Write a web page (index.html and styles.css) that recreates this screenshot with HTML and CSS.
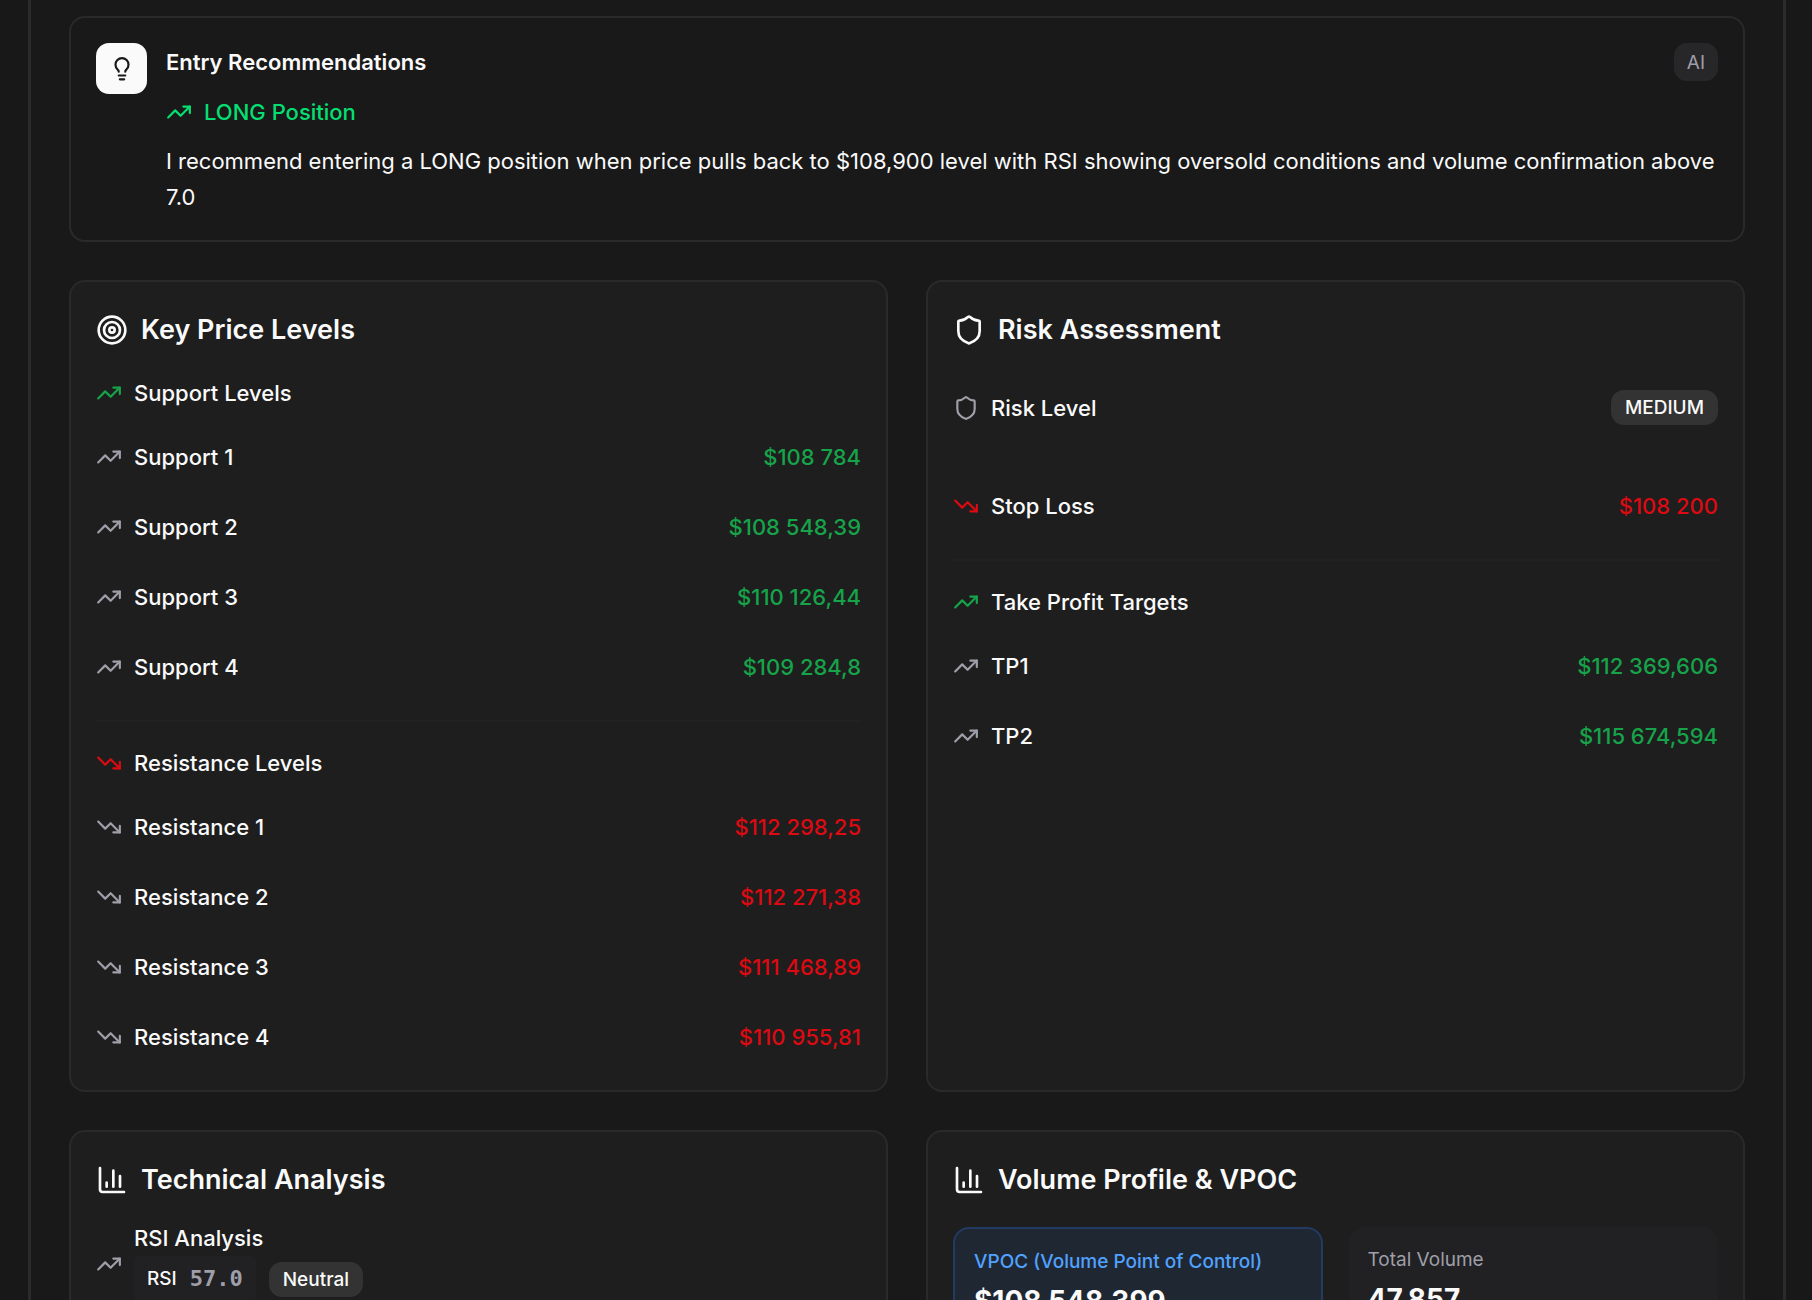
FILE: index.html
```html
<!DOCTYPE html>
<html lang="en">
<head>
    <meta charset="UTF-8">
    <meta name="viewport" content="width=device-width, initial-scale=1.0">
    <title>Market Analysis</title>
    <link rel="stylesheet" href="styles.css">
</head>
<body>
    <!-- Icon sprite -->
    <svg class="sprite" aria-hidden="true">
        <symbol id="up" viewBox="0 0 24 24">
            <path d="M16 7h6v6"/>
            <path d="m22 7-8.5 8.5-5-5L2 17"/>
        </symbol>
        <symbol id="down" viewBox="0 0 24 24">
            <path d="M16 17h6v-6"/>
            <path d="m22 17-8.5-8.5-5 5L2 7"/>
        </symbol>
        <symbol id="shield" viewBox="0 0 24 24">
            <path d="M20 13c0 5-3.5 7.5-7.66 8.95a1 1 0 0 1-.67-.01C7.5 20.5 4 18 4 13V6a1 1 0 0 1 1-1c2 0 4.5-1.2 6.24-2.72a1.17 1.17 0 0 1 1.52 0C14.51 3.81 17 5 19 5a1 1 0 0 1 1 1z"/>
        </symbol>
        <symbol id="target" viewBox="0 0 24 24">
            <circle cx="12" cy="12" r="10"/>
            <circle cx="12" cy="12" r="6"/>
            <circle cx="12" cy="12" r="2"/>
        </symbol>
        <symbol id="chart" viewBox="0 0 24 24">
            <path d="M3 3v16a2 2 0 0 0 2 2h16"/>
            <path d="M18 17V9"/>
            <path d="M13 17V5"/>
            <path d="M8 17v-3"/>
        </symbol>
        <symbol id="bulb" viewBox="0 0 24 24">
            <path d="M9 14.5c0-1-.4-1.5-1.2-2.2a6 6 0 1 1 8.4 0c-.8.7-1.2 1.2-1.2 2.2"/>
            <path d="M9 18h6"/>
            <path d="M10 21.5h4"/>
        </symbol>
    </svg>

    <main class="panel">
        <section class="card entry">
            <div class="entry-icon"><svg class="icon"><use href="#bulb"/></svg></div>
            <div class="entry-body">
                <h2 class="entry-title">Entry Recommendations</h2>
                <div class="entry-side"><svg class="icon"><use href="#up"/></svg>LONG Position</div>
                <p class="entry-text">I recommend entering a LONG position when price pulls back to $108,900 level with RSI showing oversold conditions and volume confirmation above 7.0</p>
            </div>
            <span class="tag">AI</span>
        </section>

        <div class="grid">
            <section class="card raised">
                <h2 class="card-title"><svg class="icon icon-lg"><use href="#target"/></svg>Key Price Levels</h2>

                <h3 class="group-title"><svg class="icon green"><use href="#up"/></svg>Support Levels</h3>
                <dl class="levels">
                    <div class="row"><dt><svg class="icon"><use href="#up"/></svg>Support 1</dt><dd class="green">$108 784</dd></div>
                    <div class="row"><dt><svg class="icon"><use href="#up"/></svg>Support 2</dt><dd class="green">$108 548,39</dd></div>
                    <div class="row"><dt><svg class="icon"><use href="#up"/></svg>Support 3</dt><dd class="green">$110 126,44</dd></div>
                    <div class="row"><dt><svg class="icon"><use href="#up"/></svg>Support 4</dt><dd class="green">$109 284,8</dd></div>
                </dl>

                <hr class="divider">

                <h3 class="group-title"><svg class="icon red"><use href="#down"/></svg>Resistance Levels</h3>
                <dl class="levels">
                    <div class="row"><dt><svg class="icon"><use href="#down"/></svg>Resistance 1</dt><dd class="red">$112 298,25</dd></div>
                    <div class="row"><dt><svg class="icon"><use href="#down"/></svg>Resistance 2</dt><dd class="red">$112 271,38</dd></div>
                    <div class="row"><dt><svg class="icon"><use href="#down"/></svg>Resistance 3</dt><dd class="red">$111 468,89</dd></div>
                    <div class="row"><dt><svg class="icon"><use href="#down"/></svg>Resistance 4</dt><dd class="red">$110 955,81</dd></div>
                </dl>
            </section>

            <section class="card raised">
                <h2 class="card-title"><svg class="icon icon-lg"><use href="#shield"/></svg>Risk Assessment</h2>

                <dl class="levels">
                    <div class="row risk-row"><dt><svg class="icon"><use href="#shield"/></svg>Risk Level</dt><dd class="badge">MEDIUM</dd></div>
                    <div class="row"><dt><svg class="icon red"><use href="#down"/></svg>Stop Loss</dt><dd class="red">$108 200</dd></div>
                </dl>

                <hr class="divider">

                <h3 class="group-title"><svg class="icon green"><use href="#up"/></svg>Take Profit Targets</h3>
                <dl class="levels">
                    <div class="row"><dt><svg class="icon"><use href="#up"/></svg>TP1</dt><dd class="green">$112 369,606</dd></div>
                    <div class="row"><dt><svg class="icon"><use href="#up"/></svg>TP2</dt><dd class="green">$115 674,594</dd></div>
                </dl>
            </section>

            <section class="card raised">
                <h2 class="card-title"><svg class="icon icon-lg"><use href="#chart"/></svg>Technical Analysis</h2>

                <div class="rsi">
                    <svg class="icon"><use href="#up"/></svg>
                    <div class="rsi-body">
                        <h3 class="rsi-title">RSI Analysis</h3>
                        <div class="rsi-values">
                            <span class="chip">RSI <b class="chip-value">57.0</b></span>
                            <span class="badge">Neutral</span>
                        </div>
                    </div>
                </div>
            </section>

            <section class="card raised">
                <h2 class="card-title"><svg class="icon icon-lg"><use href="#chart"/></svg>Volume Profile &amp; VPOC</h2>

                <div class="stats">
                    <div class="stat stat-blue">
                        <div class="stat-label">VPOC (Volume Point of Control)</div>
                        <div class="stat-value">$108 548,399</div>
                    </div>
                    <div class="stat">
                        <div class="stat-label">Total Volume</div>
                        <div class="stat-value">47,857</div>
                    </div>
                </div>
            </section>
        </div>
    </main>
</body>
</html>
```
FILE: styles.css
```css
* {
    margin: 0;
    padding: 0;
    box-sizing: border-box;
}

body {
    height: 100vh;
    overflow: hidden;
    background-color: #181818;
    color: #fafafa;
    font-family: Inter, "Liberation Sans", sans-serif;
    font-size: 22px;
    line-height: 32px;
}

.sprite {
    display: none;
}

.panel {
    margin: 0 26px 0 28px;
    padding: 16px 38px;
    border: solid #2b2b2b;
    border-width: 0 3px;
    background-color: #191919;
}

.card {
    padding: 25px;
    border: 2px solid #2a2a2a;
    border-radius: 16px;
}

.raised {
    padding: 26px 25px 18px;
    background-color: #1e1e1e;
}

/* Icons */
.icon {
    flex: none;
    width: 26px;
    height: 26px;
    fill: none;
    stroke: currentColor;
    stroke-width: 2;
    stroke-linecap: round;
    stroke-linejoin: round;
}

.icon-lg {
    width: 32px;
    height: 32px;
}

/* Entry recommendation */
.entry {
    display: flex;
    align-items: flex-start;
    gap: 19px;
    position: relative;
    margin-bottom: 38px;
}

.entry-icon {
    display: flex;
    align-items: center;
    justify-content: center;
    width: 51px;
    height: 51px;
    border-radius: 13px;
    background-color: #fafafa;
    color: #18181b;
}

.entry-body {
    flex: 1;
    padding-top: 1px;
}

.entry-title {
    margin-bottom: 14px;
    font-size: 22px;
    font-weight: 600;
    line-height: 36px;
}

.entry-side {
    display: flex;
    align-items: center;
    gap: 12px;
    margin-bottom: 13px;
    color: #05df72;
    font-weight: 500;
    line-height: 36px;
}

.entry-text {
    line-height: 36px;
}

/* Sits over the top right corner of the card */
.tag {
    position: absolute;
    top: 25px;
    right: 25px;
    padding: 4px 13px 2px;
    border-radius: 13px;
    background-color: #27272a;
    color: #9f9fa9;
    font-size: 19px;
}

/* Cards */
.grid {
    display: grid;
    grid-template-columns: 1fr 1fr;
    gap: 38px;
}

.card-title {
    display: flex;
    align-items: center;
    gap: 13px;
    margin-bottom: 25px;
    font-size: 27px;
    font-weight: 600;
    line-height: 44px;
}

.group-title {
    display: flex;
    align-items: center;
    gap: 12px;
    margin-bottom: 13px;
    font-size: 22px;
    font-weight: 500;
}

.row {
    display: flex;
    align-items: center;
    justify-content: space-between;
    padding: 19px 0;
    font-weight: 500;
}

.row dt {
    display: flex;
    align-items: center;
    gap: 12px;
}

.row dt .icon:not(.red) {
    color: #9f9fa9;
}

.risk-row {
    margin-bottom: 32px;
    padding: 13px 0;
    border-bottom: 1px solid #1f1f1f;
}

.divider {
    height: 2px;
    margin: 18px 0 25px;
    border: none;
    background-color: #212121;
}

.green {
    color: #16a34a;
}

.red {
    color: #dc0a12;
}

.badge {
    padding: 2px 14px 1px;
    border-radius: 13px;
    background-color: #333;
    font-size: 19px;
    font-weight: 500;
}

/* Technical analysis */
.rsi {
    display: flex;
    align-items: center;
    gap: 12px;
    margin-top: -5px;
}

.rsi > .icon {
    color: #9f9fa9;
}

.rsi-body {
    padding-bottom: 4px;
}

.rsi-title {
    margin-bottom: 2px;
    font-size: 22px;
    font-weight: 500;
}

.rsi-values {
    display: flex;
    align-items: center;
    gap: 13px;
}

.chip {
    display: flex;
    align-items: center;
    gap: 13px;
    padding: 7px 13px;
    border-radius: 6px;
    background-color: #212123;
    font-size: 19px;
    font-weight: 500;
}

.chip-value {
    color: #9f9fa9;
    font-family: "DejaVu Sans Mono", monospace;
    font-size: 22px;
}

/* Volume profile */
.stats {
    display: grid;
    grid-template-columns: 1fr 1fr;
    gap: 26px;
}

.stat {
    padding: 17px 19px;
    border-radius: 16px;
    background-color: #212123;
}

.stat-blue {
    border: 2px solid #233a63;
    background-color: #1f2733;
}

.stat-label {
    color: #9f9fa9;
    font-size: 19px;
}

.stat-blue .stat-label {
    color: #51a2ff;
    font-weight: 500;
}

.stat-value {
    font-size: 28px;
    font-weight: 700;
    line-height: 46px;
}
```
